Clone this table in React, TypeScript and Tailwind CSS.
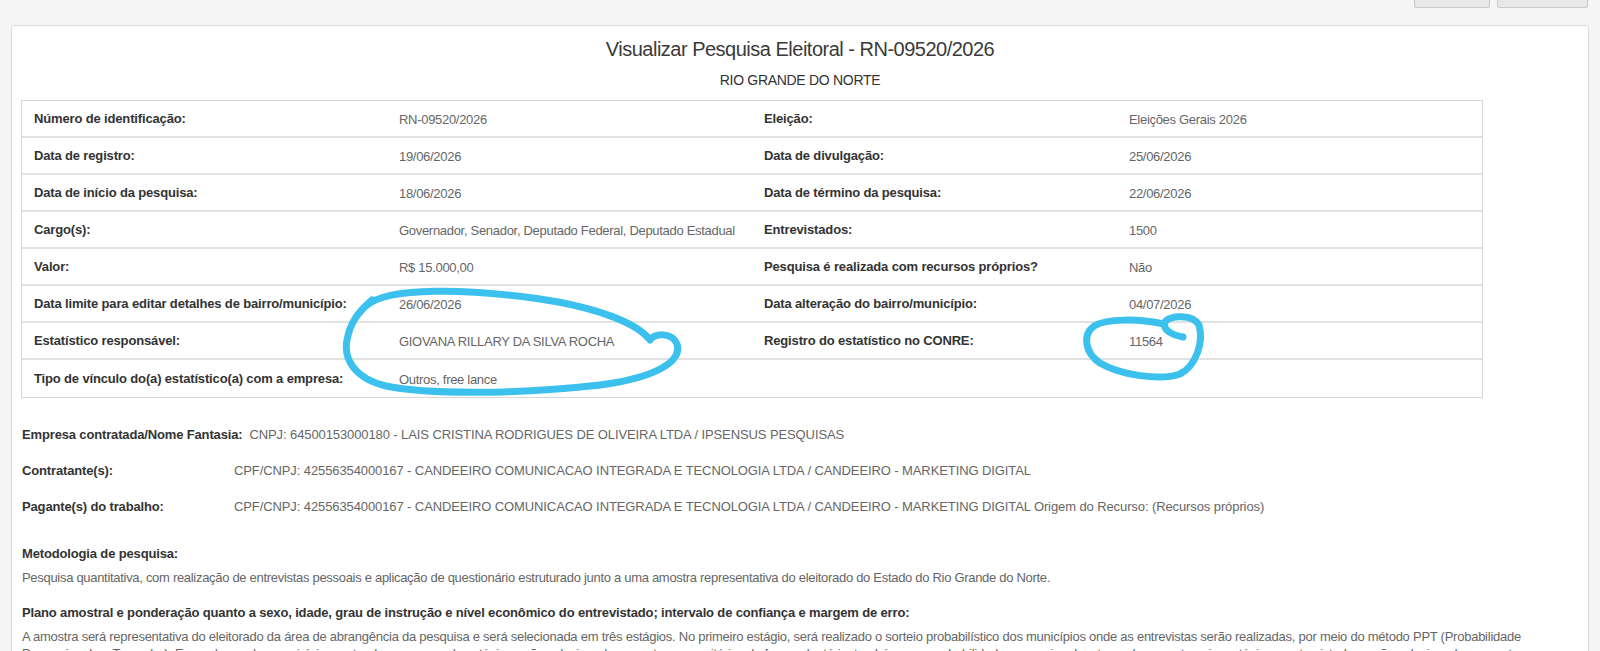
import React from 'react'

const font = { fontFamily: '"Liberation Sans", Arial, sans-serif' }

type Row = [string, string, string, string]

const rows: Row[] = [
  ['Número de identificação:', 'RN-09520/2026', 'Eleição:', 'Eleições Gerais 2026'],
  ['Data de registro:', '19/06/2026', 'Data de divulgação:', '25/06/2026'],
  ['Data de início da pesquisa:', '18/06/2026', 'Data de término da pesquisa:', '22/06/2026'],
  ['Cargo(s):', 'Governador, Senador, Deputado Federal, Deputado Estadual', 'Entrevistados:', '1500'],
  ['Valor:', 'R$ 15.000,00', 'Pesquisa é realizada com recursos próprios?', 'Não'],
  ['Data limite para editar detalhes de bairro/município:', '26/06/2026', 'Data alteração do bairro/município:', '04/07/2026'],
  ['Estatístico responsável:', 'GIOVANA RILLARY DA SILVA ROCHA', 'Registro do estatístico no CONRE:', '11564'],
  ['Tipo de vínculo do(a) estatístico(a) com a empresa:', 'Outros, free lance', '', ''],
]

const partes = [
  {
    label: 'Empresa contratada/Nome Fantasia:',
    value: 'CNPJ: 64500153000180 - LAIS CRISTINA RODRIGUES DE OLIVEIRA LTDA / IPSENSUS PESQUISAS',
  },
  {
    label: 'Contratante(s):',
    value: 'CPF/CNPJ: 42556354000167 - CANDEEIRO COMUNICACAO INTEGRADA E TECNOLOGIA LTDA / CANDEEIRO - MARKETING DIGITAL',
  },
  {
    label: 'Pagante(s) do trabalho:',
    value:
      'CPF/CNPJ: 42556354000167 - CANDEEIRO COMUNICACAO INTEGRADA E TECNOLOGIA LTDA / CANDEEIRO - MARKETING DIGITAL Origem do Recurso: (Recursos próprios)',
  },
]

function Marcacoes() {
  // rabiscos azuis feitos à mão por cima da tela
  return (
    <svg
      className="pointer-events-none absolute left-0 top-0"
      width="1600"
      height="651"
      viewBox="0 0 1600 651"
      fill="none"
      stroke="#3cc1ee"
      strokeWidth="7"
      strokeLinecap="round"
      strokeLinejoin="round"
    >
      <path d="M 366 306 C 388 286, 470 289, 540 299 C 600 308, 638 324, 650 340 C 655 333, 672 332, 677 344 C 682 360, 660 377, 600 385 C 520 394, 430 395, 386 386 C 356 379, 343 360, 347 340 C 350 324, 356 314, 372 300" />
      <path d="M 1183 337 C 1172 335, 1162 330, 1165 322 C 1169 315, 1193 314, 1199 325 C 1204 342, 1196 366, 1180 374 C 1160 381, 1120 375, 1100 363 C 1085 353, 1082 335, 1094 326 C 1107 318, 1140 319, 1164 324" />
    </svg>
  )
}

export default function App() {
  return (
    <div className="relative h-[651px] overflow-hidden bg-[#f5f5f5] text-[13px]" style={font}>
      <div className="flex justify-end gap-[7px] pr-[12px]">
        <div className="h-[8px] w-[76px] rounded-b-[3px] border border-t-0 border-[#c8c8c8] bg-[#e8e8e8]" />
        <div className="h-[8px] w-[91px] rounded-b-[3px] border border-t-0 border-[#c8c8c8] bg-[#e8e8e8]" />
      </div>

      <div className="mx-[11px] mt-[17px] rounded-[3px] border border-[#dcdcdc] bg-white px-[9px] pt-[11px] shadow-[0_1px_2px_rgba(0,0,0,0.05)]">
        <h1 className="text-center text-[20px] leading-[24px] tracking-[-0.5px] text-[#3a3a3a]">Visualizar Pesquisa Eleitoral - RN-09520/2026</h1>
        <h2 className="mt-[11px] text-center text-[14px] leading-[17px] tracking-[-0.3px] text-[#333]">RIO GRANDE DO NORTE</h2>

        <div className="mt-[11px] w-[1462px] border border-[#d6d6d6]">
          {rows.map((r, i) => (
            <div key={i} className={`grid h-[37px] grid-cols-4 items-center ${i < rows.length - 1 ? 'border-b-2 border-[#e2e2e2]' : ''}`}>
              <div className="px-[12px] font-bold tracking-[-0.15px] text-[#333]">{r[0]}</div>
              <div className="whitespace-nowrap px-[12px] pt-[3px] tracking-[-0.3px] text-[#666]">{r[1]}</div>
              <div className="px-[12px] font-bold tracking-[-0.15px] text-[#333]">{r[2]}</div>
              <div className="whitespace-nowrap px-[12px] pt-[3px] tracking-[-0.3px] text-[#666]">{r[3]}</div>
            </div>
          ))}
        </div>

        <div className="mt-[28px] flex flex-col gap-[19px] pl-[1px]">
          {partes.map((p) => (
            <div key={p.label} className="flex leading-[17px]">
              <div className="min-w-[212px] pr-[7px] font-bold tracking-[-0.15px] text-[#333]">{p.label}</div>
              <div className="tracking-[-0.1px] text-[#666]">{p.value}</div>
            </div>
          ))}
        </div>

        <div className="mt-[30px] pl-[1px] leading-[17px]">
          <div className="font-bold tracking-[-0.15px] text-[#333]">Metodologia de pesquisa:</div>
          <p className="mt-[7px] tracking-[-0.3px] text-[#666]">
            Pesquisa quantitativa, com realização de entrevistas pessoais e aplicação de questionário estruturado junto a uma amostra representativa do eleitorado do Estado do Rio Grande do Norte.
          </p>
          <div className="mt-[18px] font-bold tracking-[-0.15px] text-[#333]">
            Plano amostral e ponderação quanto a sexo, idade, grau de instrução e nível econômico do entrevistado; intervalo de confiança e margem de erro:
          </div>
          <p className="mt-[7px] pr-[6px] tracking-[-0.25px] text-[#666]">
            A amostra será representativa do eleitorado da área de abrangência da pesquisa e será selecionada em três estágios. No primeiro estágio, será realizado o sorteio probabilístico dos municípios onde as entrevistas serão realizadas, por meio do método PPT (Probabilidade Proporcional ao Tamanho). Em cada um dos municípios sorteados, no segundo estágio, serão selecionados os setores censitários de forma aleatória, também com probabilidade proporcional ao tamanho, e no terceiro estágio os entrevistados serão selecionados por cotas.
          </p>
        </div>
      </div>

      <Marcacoes />
    </div>
  )
}
